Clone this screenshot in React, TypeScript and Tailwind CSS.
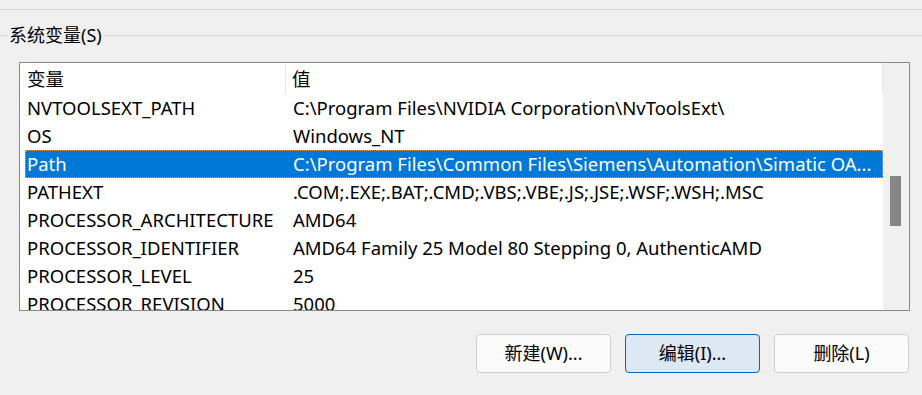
import React from "react";

const rows: [string, string][] = [
  ["NVTOOLSEXT_PATH", "C:\\Program Files\\NVIDIA Corporation\\NvToolsExt\\"],
  ["OS", "Windows_NT"],
  ["Path", "C:\\Program Files\\Common Files\\Siemens\\Automation\\Simatic OA..."],
  ["PATHEXT", ".COM;.EXE;.BAT;.CMD;.VBS;.VBE;.JS;.JSE;.WSF;.WSH;.MSC"],
  ["PROCESSOR_ARCHITECTURE", "AMD64"],
  ["PROCESSOR_IDENTIFIER", "AMD64 Family 25 Model 80 Stepping 0, AuthenticAMD"],
  ["PROCESSOR_LEVEL", "25"],
  ["PROCESSOR_REVISION", "5000"],
];

const font = {
  fontFamily: '"Noto Sans", "Noto Sans CJK SC", sans-serif',
};

export default function App() {
  return (
    <div
      className="w-[922px] h-[395px] bg-[#f0f0f0] overflow-hidden text-black text-[18px]"
      style={font}
    >
      <div className="h-[9px]" />
      <div className="h-px bg-[#dadada]" />
      {/* group title */}
      <div className="flex items-center mt-[15px] h-[20px]">
        <div className="w-[8px] h-px bg-[#dadada]" />
        <span className="px-[1px] leading-[20px] whitespace-nowrap">系统变量(S)</span>
        <div className="flex-1 h-px bg-[#dadada]" />
      </div>
      {/* list */}
      <div className="ml-[19px] mt-[17px] w-[891px] h-[249px] border border-[#828790] bg-white flex text-[18.5px]">
        <div className="flex-1 flex flex-col overflow-hidden">
          <div className="h-[31px] flex shrink-0">
            <div className="w-[5px]" />
            <div className="w-[261px] pl-[2px] flex items-center border-r border-[#e5e5e5] my-[1px]">
              变量
            </div>
            <div className="flex-1 pl-[6px] flex items-center border-r border-[#e5e5e5] my-[1px]">
              值
            </div>
          </div>
          {rows.map(([k, v]) => {
            const sel = k === "Path";
            return (
              <div key={k} className="h-[28px] flex shrink-0 pl-[5px]">
                <div
                  className={
                    "flex-1 flex items-center whitespace-nowrap " +
                    (sel
                      ? "bg-[#0078d7] text-white border border-dotted border-[#f0a050]"
                      : "border border-transparent")
                  }
                >
                  <div className="w-[261px] pl-[1px] overflow-hidden">{k}</div>
                  <div className="flex-1 pl-[6px] overflow-hidden">{v}</div>
                </div>
              </div>
            );
          })}
        </div>
        <div className="w-[26px] bg-[#f0f0f0] pt-[113px] pl-[7px]">
          <div className="w-[11px] h-[50px] bg-[#868686]" />
        </div>
      </div>
      {/* buttons */}
      <div className="flex justify-end gap-[14px] pr-[13px] mt-[23px]">
        <button className="w-[135px] h-[39px] rounded-[4px] border border-[#d0d0d0] bg-[#fbfbfb] text-[18px]">
          新建(W)...
        </button>
        <button className="w-[135px] h-[39px] rounded-[4px] border border-[#0067c0] bg-[#dce8f4] text-[18px]">
          编辑(I)...
        </button>
        <button className="w-[135px] h-[39px] rounded-[4px] border border-[#d0d0d0] bg-[#fbfbfb] text-[18px]">
          删除(L)
        </button>
      </div>
    </div>
  );
}
